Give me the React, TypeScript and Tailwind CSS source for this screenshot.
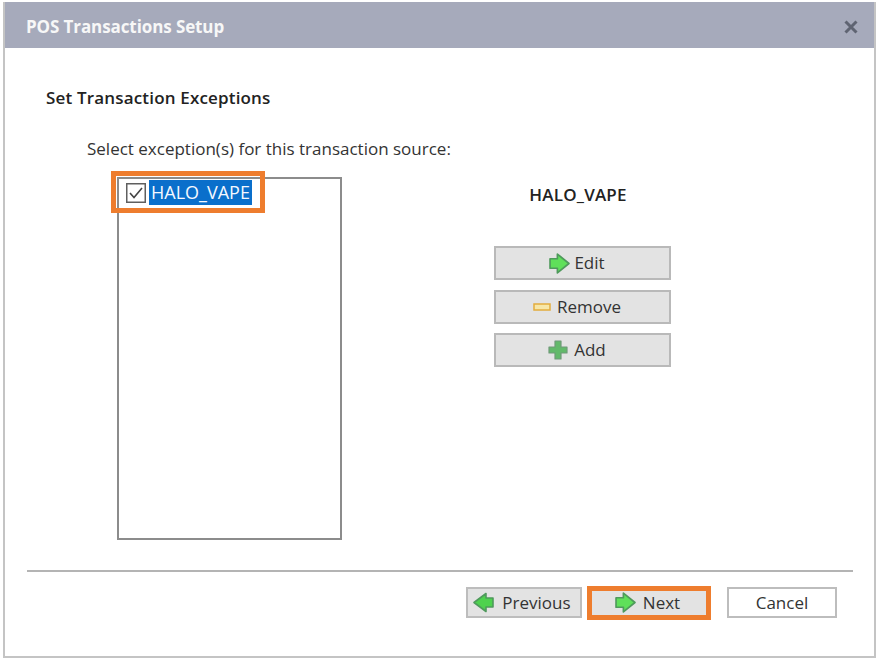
const font = "font-['Open_Sans',sans-serif]";

function ArrowRight() {
  return (
    <svg width="21" height="21" viewBox="0 0 20 20" className="shrink-0">
      <path
        d="M1 5.5h7V1l11 9-11 9v-4.5H1z"
        fill="#5fe05a"
        stroke="#4f9a5c"
        strokeWidth="1.6"
        strokeLinejoin="round"
      />
    </svg>
  );
}

function ArrowLeft() {
  return (
    <svg width="22" height="21" viewBox="0 0 22 20" className="shrink-0">
      <path
        d="M21 5.5h-7V1L2 10l12 9v-4.5h7z"
        fill="#4ed24e"
        stroke="#4f9a5c"
        strokeWidth="1.6"
        strokeLinejoin="round"
      />
    </svg>
  );
}

function PlusIcon() {
  return (
    <svg width="20" height="20" viewBox="0 0 20 20" className="shrink-0">
      <path
        d="M7 1h6v6h6v6h-6v6H7v-6H1V7h6z"
        fill="#62b96a"
        stroke="#6f9a78"
        strokeWidth="1.2"
        strokeLinejoin="round"
      />
    </svg>
  );
}

function MinusIcon() {
  return (
    <svg width="18" height="8" viewBox="0 0 18 8" className="shrink-0">
      <rect x="1" y="1" width="16" height="6" fill="#f7e7a8" stroke="#e3ad3e" strokeWidth="1.5" />
    </svg>
  );
}

function CheckBox() {
  return (
    <svg width="20" height="20" viewBox="0 0 20 20" className="shrink-0">
      <rect x="0.75" y="0.75" width="18.5" height="18.5" fill="#fff" stroke="#5f5f5f" strokeWidth="1.5" />
      <path d="M4 10l4 4.5L16 5" fill="none" stroke="#444" strokeWidth="1.6" />
    </svg>
  );
}

function SideButton({ icon, label, gap }: { icon: React.ReactNode; label: string; gap: string }) {
  return (
    <button
      className={`flex h-[34px] w-[177px] items-center justify-center ${gap} border-2 border-[#b9b9b9] bg-[#e3e3e3] pr-[11px] text-[17px] text-[#333]`}
    >
      {icon}
      <span>{label}</span>
    </button>
  );
}

export default function App() {
  return (
    <div className={`h-[661px] w-[880px] overflow-hidden bg-white pt-[2px] pl-[3px] ${font}`}>
      <div className="flex h-[656px] w-[873px] flex-col border-2 border-t-0 border-[#c4c4c4]">
        <div className="flex h-[46px] shrink-0 items-center justify-between bg-[#a6aabb] pt-[4px] pr-[16px] pl-[21px]">
          <span className="text-[17px] font-bold tracking-[-0.1px] text-[#f7f7f7]">
            POS Transactions Setup
          </span>
          <svg width="14" height="14" viewBox="0 0 14 14">
            <path d="M1.5 1.5l11 11M12.5 1.5l-11 11" stroke="#5f6472" strokeWidth="3" />
          </svg>
        </div>

        <div className="flex flex-1 flex-col pt-[38px] pl-[41px]">
          <h1 className="text-[17px] leading-6 font-semibold tracking-[0.17px] text-[#222]">
            Set Transaction Exceptions
          </h1>
          <p className="mt-[27px] ml-[41px] text-[17px] leading-6 text-[#333]">
            Select exception(s) for this transaction source:
          </p>

          <div className="mt-[16px] ml-[71px] flex">
            <div className="relative h-[363px] w-[225px] border-2 border-[#8c8c8c]">
              <div className="flex items-center pt-[1px] pl-[7px]">
                <CheckBox />
                <span className="ml-[3px] flex h-[25px] w-[103px] items-center justify-center bg-[#0a6fcb] text-[18px] text-[#f4f8ff]">
                  HALO_VAPE
                </span>
              </div>
              <div className="absolute top-[-8px] left-[-8px] h-[42px] w-[154px] border-[5px] border-[#ee7d2e]" />
            </div>

            <div className="ml-[152px] flex w-[177px] flex-col">
              <div className="mt-[6px] pr-[9px] text-center text-[17px] leading-6 font-semibold tracking-[0.2px] text-[#222]">
                HALO_VAPE
              </div>
              <div className="mt-[39px] flex flex-col gap-[9.5px]">
                <SideButton icon={<ArrowRight />} label="Edit" gap="gap-[4px]" />
                <SideButton icon={<MinusIcon />} label="Remove" gap="gap-[6px]" />
                <SideButton icon={<PlusIcon />} label="Add" gap="gap-[6px]" />
              </div>
            </div>
          </div>

          <div className="mt-[30px] ml-[-19px] h-[2px] w-[826px] bg-[#b4b4b4]" />

          <div className="mt-[15px] ml-[420px] flex items-center text-[17px] text-[#333]">
            <button className="flex h-[31px] w-[116px] items-center justify-center gap-[8px] border-2 border-[#bdbdbd] bg-[#e3e3e3] pr-[5px]">
              <ArrowLeft />
              <span>Previous</span>
            </button>
            <button className="ml-[10px] flex h-[24px] w-[114px] items-center justify-center gap-[7px] bg-[#e3e3e3] pr-[3px] outline-[5px] outline-[#ee7d2e]">
              <ArrowRight />
              <span>Next</span>
            </button>
            <button className="ml-[21px] flex h-[31px] w-[110px] items-center justify-center border-2 border-[#bdbdbd] bg-white">
              Cancel
            </button>
          </div>
        </div>
      </div>
    </div>
  );
}
